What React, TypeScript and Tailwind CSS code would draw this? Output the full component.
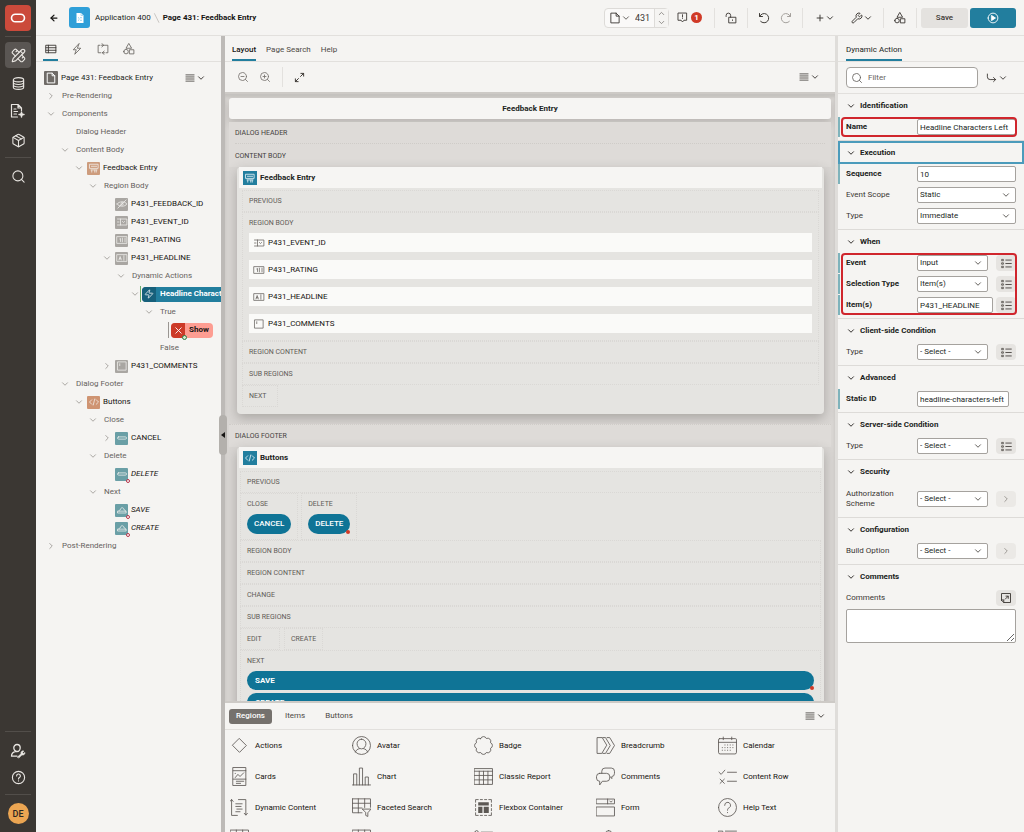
import React, { type ReactNode } from "react";
import { ArrowLeft, ChevronDown, ChevronRight, ChevronUp, Package, PencilRuler, Plus, Search, Wrench, ZoomIn, ZoomOut, Zap } from "lucide-react";

type GlyphProps = { d: string; box?: number; w?: number; className?: string; children?: ReactNode };

function Glyph({ d, box = 16, w = 1, className = "size-3", children }: GlyphProps) {
  return (
    <svg viewBox={`0 0 ${box} ${box}`} fill="none" stroke="currentColor" strokeWidth={w} strokeLinecap="round" strokeLinejoin="round" className={`shrink-0 ${className}`} aria-hidden="true">
      <path d={d} />
      {children}
    </svg>
  );
}

const shapesPath = "M8 1 11.500 7H4.500ZM1 11.500a3 3 0 1 0 6 0a3 3 0 1 0 -6 0ZM9 9h5.500v5.500h-5.500Z";
const menuPath = "M1.5 3h13M1.5 6.300h13M1.5 9.600h13M1.5 13h13";

function MenuChevron({ label }: { label: string }) {
  return (
    <button aria-label={label} className="flex items-center gap-px text-[#403c38]">
      <Glyph d={menuPath} w={1.300} className="size-[10px]" />
      <ChevronDown className="size-[10px]" strokeWidth={2.300} />
    </button>
  );
}

/* ---------- Navigation rail ---------- */

function Rail() {
  return (
    <nav aria-label="Main" className="flex w-9 shrink-0 flex-col items-center bg-[#3b3733] pt-[5px] text-[#e8e5e1]">
      <a href="#home" aria-label="Home" className="flex size-[26px] items-center justify-center rounded bg-[#cb4a3b] text-white">
        <Glyph d="M6 4.700h6a4.300 4.300 0 0 1 0 8.600h-6a4.300 4.300 0 0 1 0-8.600Z" box={18} w={1.800} className="size-4" />
      </a>
      <hr className="mt-[5px] w-[26px] border-[#524e4a]" />
      <a href="#builder" aria-label="App Builder" className="mt-[5px] flex size-[26px] items-center justify-center rounded bg-[#5a5653]">
        <PencilRuler className="size-[15px]" strokeWidth={1.800} />
      </a>
      <a href="#sql" aria-label="SQL Workshop" className="mt-[5px] flex size-5 items-center justify-center">
        <Glyph d="M2.500 4c0-1.400 2.400-2.300 5.500-2.300S13.500 2.600 13.500 4v8c0 1.400-2.400 2.300-5.500 2.300S2.500 13.400 2.500 12ZM2.500 4c0 1.400 2.400 2.300 5.500 2.300S13.500 5.400 13.500 4M2.500 6.700c0 1.400 2.400 2.300 5.500 2.300s5.500-.9 5.500-2.300M2.500 9.400c0 1.400 2.400 2.300 5.500 2.300s5.500-.9 5.500-2.300" w={1.200} className="size-[15px]" />
      </a>
      <a href="#team" aria-label="Team Development" className="mt-2 flex size-5 items-center justify-center">
        <Glyph d="M7.500 14H1.500V1.500H8L11.500 5v2.500M8 1.500V5h3.500M4 6h2M4 8.500h3.500M4 11h2.500" w={1.200} className="size-4">
          <path d="M11.500 8l1 2.500 2.500 1-2.500 1-1 2.500-1-2.500-2.500-1 2.500-1Z" fill="currentColor" strokeWidth={0.300} />
        </Glyph>
      </a>
      <a href="#gallery" aria-label="Gallery" className="mt-[9px] flex size-5 items-center justify-center">
        <Package className="size-[15px]" strokeWidth={1.700} />
      </a>
      <hr className="mt-[7px] w-[26px] border-[#524e4a]" />
      <button aria-label="Search" className="mt-2 flex size-5 items-center justify-center">
        <Search className="size-[15px]" strokeWidth={1.700} />
      </button>
      <div className="mt-auto flex flex-col items-center pb-2">
        <hr className="w-[26px] border-[#524e4a]" />
        <button aria-label="Administration" className="mt-[9px] flex size-5 items-center justify-center">
          <Glyph d="M7 1.500a3.200 3.200 0 0 1 3.200 3.200c0 1.700-1.200 3.800-3.200 3.800S3.800 6.400 3.800 4.700A3.200 3.200 0 0 1 7 1.500ZM5.500 8.300C3 9 1.500 10.500 1.500 13.200H7" w={1.300} className="size-4">
            <path d="M7.500 14 11 10.800a2.200 2.200 0 0 1 2.800-2.800l-1.200 1.400 1 1 1.300-1a2.200 2.200 0 0 1-3 2.500L9 14.800Z" fill="currentColor" strokeWidth={0.600} />
          </Glyph>
        </button>
        <button aria-label="Help" className="mt-[6px] flex size-5 items-center justify-center">
          <Glyph d="M1.500 8a6.500 6.500 0 1 0 13 0a6.500 6.500 0 1 0-13 0ZM6 6.300a2 2 0 1 1 3 1.700c-.7.400-1 .7-1 1.500M8 11.500v.1" w={1.200} className="size-[15px]" />
        </button>
        <hr className="mt-[7px] w-[26px] border-[#524e4a]" />
        <button className="mt-2 flex size-[21px] items-center justify-center rounded-full bg-[#eba552] text-[9px] font-medium text-[#2b2622]">DE</button>
      </div>
    </nav>
  );
}

/* ---------- Header ---------- */

function Divider() {
  return <span className="h-5 w-px bg-[#e3e1de]" />;
}

function Header() {
  return (
    <header className="flex h-9 shrink-0 items-center border-b border-[#e2e0dd] pr-2 pl-[13px]">
      <button aria-label="Back" className="text-[#161513]">
        <ArrowLeft className="size-[10px]" strokeWidth={3} />
      </button>
      <span className="ml-[10px] flex size-[21px] items-center justify-center rounded-[3px] bg-[#2f9fd8]">
        <svg viewBox="0 0 12 12" className="size-3" aria-hidden="true">
          <path d="M2.500 1H7l2.500 2.500V11h-7Z" fill="#fff" />
          <path d="M7 1v2.500h2.500M4 5.500h1M6 5.500h2M4 7h2.500M7.500 7h.5M4 8.500h1M6 8.500h2" stroke="#8ccbe9" strokeWidth=".7" fill="none" />
        </svg>
      </span>
      <a href="#app" className="ml-[5px] text-[#221f1c]">Application 400</a>
      <Glyph d="M4 1 11 15" w={1.100} className="mx-px size-[10px] text-[#b5b2ae]" />
      <h1 className="font-bold whitespace-nowrap text-[#161513]">Page 431: Feedback Entry</h1>

      <div className="ml-auto flex items-center">
        <div className="flex h-5 items-center rounded-sm border border-[#dddbd8] bg-[#faf9f8]">
          <button aria-label="Choose page" className="flex items-center pl-1">
            <Glyph d="M3 1.500h6.500L13.500 5.500v9H3ZM9.500 1.500v4h4" w={1.200} className="size-3" />
            <ChevronDown className="size-[10px]" strokeWidth={1.800} />
          </button>
          <label className="flex">
            <span className="sr-only">Page number</span>
            <input defaultValue="431" className="h-4 w-[23px] bg-transparent pl-1 text-[9px]" />
          </label>
          <div className="flex h-full w-[14px] flex-col items-center justify-between border-l border-[#dddbd8] bg-[#f5f4f2] text-[#77736f]">
            <button aria-label="Next page"><ChevronUp className="size-[9px]" strokeWidth={2} /></button>
            <button aria-label="Previous page"><ChevronDown className="size-[9px]" strokeWidth={2} /></button>
          </div>
        </div>
        <button aria-label="Messages" className="ml-2 flex items-center gap-[3px]">
          <Glyph d="M2 1.500h12v10.500H10L8 14.500l-2-2.500H2ZM8 4v3.300M8 9.200v.1" w={1.300} className="size-[11px]" />
          <span className="flex size-[11px] items-center justify-center rounded-full bg-[#d03a27] text-[8px] leading-none font-bold text-white">1</span>
        </button>
        <span className="ml-3 flex items-center"><Divider /></span>
        <button aria-label="Page unlocked" className="mx-[10px]">
          <Glyph d="M5.500 7h9v7.500h-9ZM7.500 7V4.500a3 3 0 0 0-6 0V6M10 10.500v.8" w={1.200} className="size-3" />
        </button>
        <Divider />
        <button aria-label="Undo" className="ml-[10px]">
          <Glyph d="M2 2v4h4M2.300 5.800A6.200 6.200 0 1 1 3.500 12.500" w={1.300} className="size-3" />
        </button>
        <button aria-label="Redo" className="mx-[10px] text-[#a19d99]">
          <Glyph d="M14 2v4h-4M13.700 5.800A6.200 6.200 0 1 0 12.500 12.500" w={1.300} className="size-3" />
        </button>
        <Divider />
        <button aria-label="Create" className="mr-2 ml-3 flex items-center">
          <Plus className="size-[10px]" strokeWidth={2.300} />
          <ChevronDown className="size-[10px]" strokeWidth={2.300} />
        </button>
        <button aria-label="Utilities" className="mr-[10px] ml-2 flex items-center">
          <Wrench className="size-3" strokeWidth={1.900} />
          <ChevronDown className="size-[10px]" strokeWidth={2.300} />
        </button>
        <Divider />
        <button aria-label="Shared components" className="mx-[10px]">
          <Glyph d={shapesPath} w={1.200} className="size-3" />
        </button>
        <Divider />
        <button className="ml-1 h-5 w-[47px] rounded-[3px] bg-[#e4e2df] font-medium">Save</button>
        <button aria-label="Save and run page" className="ml-[2px] flex h-5 w-[46px] items-center justify-center rounded-[3px] bg-[#227e9e] text-white">
          <Glyph d="M1.500 8a6.500 6.500 0 1 0 13 0a6.500 6.500 0 1 0-13 0Z" w={1.200} className="size-3">
            <path d="M6.300 4.800 11.300 8l-5 3.200Z" fill="currentColor" />
          </Glyph>
        </button>
      </div>
    </header>
  );
}

/* ---------- Rendering tree ---------- */

const itemIcons = {
  hidden: "M1.500 8C4 4 12 4 14.500 8C12 12 4 12 1.500 8ZM8 6.300a1.700 1.700 0 1 0 .01 0M2.500 13.500l11-11",
  select: "M2 4h12.500v8H2M6 4v8M2 8h2M8.500 7.300l1.500 1.400 1.500-1.400",
  number: "M1.500 3.500h13v9h-13ZM5 6.500l1-.5v4M8.500 5.500v5M12 5.500v5",
  text: "M1.500 3.500h13v9h-13ZM4 10.500l1.500-4.500 1.500 4.500M4.500 9h2M10.500 5v6",
  area: "M2.500 2.500h11v11h-11ZM5 5v2.500",
  region: "M2.500 3h11v5.500h-11ZM4.500 5.700h7M4 10.500h8M5 11v2.500M9 11v2.500M11 11v2.500",
  code: "M5 5 2 8l3 3M11 5l3 3-3 3M9 4 7 12",
  button: "M3.500 6.500h9q1.500 0 1.500 1.500t-1.500 1.500h-9Q2 9.500 2 8t1.500-1.500Z",
  hot: "M2.500 9.500h11v2.500h-11ZM4 9.500c0-1.500 1-2 2-2 0-1.500 1-2.500 2.300-2.500S10.500 6 10.500 7.500c1 0 2 .5 2 2",
};

type IconName = keyof typeof itemIcons;

type TreeRow = {
  text: string;
  level: number;
  open?: boolean;
  icon?: IconName;
  tone?: string;
  italic?: boolean;
  kind?: "event" | "action";
};

const rows: TreeRow[] = [
  { text: "Pre-Rendering", level: 0, open: false },
  { text: "Components", level: 0, open: true },
  { text: "Dialog Header", level: 1 },
  { text: "Content Body", level: 1, open: true },
  { text: "Feedback Entry", level: 2, open: true, icon: "region", tone: "bg-[#cd9c7d]" },
  { text: "Region Body", level: 3, open: true },
  { text: "P431_FEEDBACK_ID", level: 4, icon: "hidden", tone: "bg-[#a9a6a2]" },
  { text: "P431_EVENT_ID", level: 4, icon: "select", tone: "bg-[#a9a6a2]" },
  { text: "P431_RATING", level: 4, icon: "number", tone: "bg-[#a9a6a2]" },
  { text: "P431_HEADLINE", level: 4, open: true, icon: "text", tone: "bg-[#a9a6a2]" },
  { text: "Dynamic Actions", level: 5, open: true },
  { text: "Headline Characters Left", level: 6, open: true, kind: "event" },
  { text: "True", level: 7, open: true },
  { text: "Show", level: 8, kind: "action" },
  { text: "False", level: 7 },
  { text: "P431_COMMENTS", level: 4, open: false, icon: "area", tone: "bg-[#a9a6a2]" },
  { text: "Dialog Footer", level: 1, open: true },
  { text: "Buttons", level: 2, open: true, icon: "code", tone: "bg-[#cf9472]" },
  { text: "Close", level: 3, open: true },
  { text: "CANCEL", level: 4, open: false, icon: "button", tone: "bg-[#6a9fa6]" },
  { text: "Delete", level: 3, open: true },
  { text: "DELETE", level: 4, icon: "button", tone: "bg-[#6a9fa6]", italic: true },
  { text: "Next", level: 3, open: true },
  { text: "SAVE", level: 4, icon: "hot", tone: "bg-[#6a9fa6]", italic: true },
  { text: "CREATE", level: 4, icon: "hot", tone: "bg-[#6a9fa6]", italic: true },
  { text: "Post-Rendering", level: 0, open: false },
];

const indents = ["pl-2", "pl-[22px]", "pl-9", "pl-[50px]", "pl-16", "pl-[78px]", "pl-[92px]", "pl-[106px]", "pl-[120px]"];

function TreeLabel({ row }: { row: TreeRow }) {
  if (row.kind === "event") {
    return (
      <span className="-ml-0.5 flex h-4 flex-1 items-center border-l border-[#6fae6a] pl-px">
        <span className="flex h-[15px] flex-1 items-center rounded-l-sm bg-[#227e9e] font-bold text-white">
          <span className="mr-1 flex h-full w-[14px] items-center justify-center rounded-l-sm bg-[#17607b]">
            <Zap className="size-[10px]" strokeWidth={1.800} />
          </span>
          {row.text}
        </span>
      </span>
    );
  }
  if (row.kind === "action") {
    return (
      <span className="-ml-0.5 flex h-4 items-center border-l border-[#9a9692] pl-0.5">
        <span className="flex h-[15px] items-center rounded-sm bg-[#fd9d92] pr-1 font-bold text-[#161513]">
          <span className="relative mr-1 flex h-full w-[14px] items-center justify-center rounded-l-sm bg-[#cc3a28] text-white">
            <Glyph d="M4 4l8 8M12 4l-8 8" w={1.300} className="size-[11px]" />
            <span className="absolute -right-[2px] -bottom-[2px] size-[5px] rounded-full border border-[#2d7a3e] bg-[#d5ead3]" />
          </span>
          {row.text}
        </span>
      </span>
    );
  }
  if (row.icon) {
    return (
      <span className={`ml-px flex items-center gap-[3px] text-[#161310] ${row.italic ? "italic" : ""}`}>
        <span className={`relative flex size-[13px] items-center justify-center rounded-[1px] text-[#f3f1ef] ${row.tone}`}>
          <Glyph d={itemIcons[row.icon]} w={1} className="size-3" />
          {row.italic && <span className="absolute -right-0.5 -bottom-0.5 size-1 rounded-full border border-[#b5354a] bg-white" />}
        </span>
        {row.text}
      </span>
    );
  }
  return <span className="ml-1 text-[#66625e]">{row.text}</span>;
}

function Tree() {
  return (
    <section aria-label="Rendering" className="flex w-[185px] shrink-0 flex-col overflow-hidden">
      <div role="tablist" className="flex h-[26px] shrink-0 items-stretch gap-[11px] border-b border-[#e2e0dd] pl-[7px]">
        <button role="tab" aria-selected="true" aria-label="Rendering" className="flex w-[15px] items-center justify-center border-b-2 border-[#227e9e] pt-[3px]">
          <Glyph d="M1.500 3h13v10h-13ZM4.500 3v10M1.500 6.300h13M1.500 9.700h13" w={1.200} className="size-3" />
        </button>
        <button role="tab" aria-selected="false" aria-label="Dynamic Actions" className="flex w-[15px] items-center justify-center pt-px text-[#66625e]">
          <Glyph d="M10.500 1 3 9h4l-2 6 8-8H9Z" w={1.100} className="size-3" />
        </button>
        <button role="tab" aria-selected="false" aria-label="Processing" className="flex w-[15px] items-center justify-center pt-px text-[#66625e]">
          <Glyph d="M4 3H1.500v10H5M10 3h4.500v10H12M6.500.8 9 3 6.500 5.200M9.500 10.800 7 13l2.500 2.200M6 3h3M7 13h3" w={1.100} className="size-3" />
        </button>
        <button role="tab" aria-selected="false" aria-label="Page Shared Components" className="flex w-[15px] items-center justify-center pt-px text-[#66625e]">
          <Glyph d={shapesPath} w={1.100} className="size-3" />
        </button>
      </div>
      <div className="mt-[7px] flex h-[18px] items-center pr-[15px] pl-2 text-[#221f1c]">
        <span className="mr-[3px] flex size-[14px] items-center justify-center rounded-[1px] bg-[#6f6b67] text-white">
          <Glyph d="M3.500 1.500h6L13 5v9.500H3.500ZM9.500 1.500V5H13" w={1.300} className="size-3" />
        </span>
        <span className="mr-auto whitespace-nowrap">Page 431: Feedback Entry</span>
        <MenuChevron label="Tree menu" />
      </div>
      <ul>
        {rows.map((row, i) => (
          <li key={i} className={`flex h-[18px] items-center whitespace-nowrap ${indents[row.level]}`}>
            <span className="flex w-[14px] shrink-0 justify-center text-[#8f8b87]">
              {row.open === true && <ChevronDown className="size-[10px]" strokeWidth={1.800} />}
              {row.open === false && <ChevronRight className="size-[10px]" strokeWidth={1.800} />}
            </span>
            <TreeLabel row={row} />
          </li>
        ))}
      </ul>
    </section>
  );
}

/* ---------- Layout canvas ---------- */

function Slot({ name, className = "", children }: { name: string; className?: string; children?: ReactNode }) {
  return (
    <div className={`border border-dotted border-[#dad8d5] px-[6px] text-[7px] text-[#5f5b57] ${className}`}>
      <div className="flex h-5 items-center whitespace-nowrap">{name}</div>
      {children}
    </div>
  );
}

function RegionCard({ title, icon, children }: { title: string; icon: IconName; children: ReactNode }) {
  return (
    <div className="rounded bg-[#e5e4e1] px-[2px] shadow-[0_4px_12px_rgba(60,56,52,0.3)]">
      <div className="flex h-[21px] items-center bg-[#f6f5f3] pt-px pl-1 font-bold text-[#221f1c]">
        <span className="mr-[3px] flex size-[14px] items-center justify-center bg-[#227e9e] text-[#d8eaf1]">
          <Glyph d={itemIcons[icon]} w={1.200} className="size-3" />
        </span>
        {title}
      </div>
      {children}
    </div>
  );
}

const pageItems: { name: string; icon: IconName }[] = [
  { name: "P431_EVENT_ID", icon: "select" },
  { name: "P431_RATING", icon: "number" },
  { name: "P431_HEADLINE", icon: "text" },
  { name: "P431_COMMENTS", icon: "area" },
];

function RedDot() {
  return <span className="absolute right-0 bottom-0 size-1 rounded-full bg-[#d03a27]" />;
}

function Canvas() {
  return (
    <div className="min-h-0 flex-1 overflow-hidden bg-[#d9d6d3] px-1 pt-1 shadow-[inset_0_3px_3px_rgba(60,56,52,0.12)]">
      <div className="flex h-[21px] items-center justify-center rounded-[3px] bg-[#f6f5f3] font-bold text-[#221f1c] shadow-[0_4px_8px_rgba(60,56,52,0.2)]">Feedback Entry</div>
      <div className="bg-[#dedbd8] px-[6px] text-[7px] text-[#45413d]">
        <div className="mt-[3px] flex h-[22px] items-center border-b border-dotted border-[#cfccc8]">DIALOG HEADER</div>
        <div className="flex h-[23px] items-center">CONTENT BODY</div>
      </div>
      <div className="pr-[7px] pl-2">
        <RegionCard title="Feedback Entry" icon="region">
          <div className="flex flex-col px-[3px] pt-[2px] pb-[7px]">
            <Slot name="PREVIOUS" />
            <Slot name="REGION BODY" className="pb-[7px]">
              <div className="flex flex-col gap-2">
                {pageItems.map((item) => (
                  <div key={item.name} className="flex h-[19px] items-center gap-[3px] bg-[#fafaf8] pl-1 text-[8px] text-[#161310]">
                    <Glyph d={itemIcons[item.icon]} w={1} className="size-3 text-[#66625e]" />
                    {item.name}
                  </div>
                ))}
              </div>
            </Slot>
            <Slot name="REGION CONTENT" />
            <Slot name="SUB REGIONS" />
            <Slot name="NEXT" className="w-9" />
          </div>
        </RegionCard>
      </div>
      <div className="mt-[10px] flex h-[23px] items-center border-t border-dotted border-[#cfccc8] bg-[#dedbd8] px-[6px] text-[7px] text-[#45413d]">DIALOG FOOTER</div>
      <div className="pr-[7px] pl-2">
        <RegionCard title="Buttons" icon="code">
          <div className="flex flex-col px-px pt-[3px]">
            <Slot name="PREVIOUS" />
            <div className="flex gap-[3px]">
              <Slot name="CLOSE" className="pb-[5px]">
                <button className="block h-5 rounded-full bg-[#0f7496] px-[7px] text-[8px] font-medium text-white">CANCEL</button>
              </Slot>
              <Slot name="DELETE" className="pb-[5px]">
                <button className="relative block h-5 rounded-full bg-[#0f7496] px-[7px] text-[8px] font-medium text-white">
                  DELETE
                  <RedDot />
                </button>
              </Slot>
            </div>
            <Slot name="REGION BODY" />
            <Slot name="REGION CONTENT" />
            <Slot name="CHANGE" />
            <Slot name="SUB REGIONS" />
            <div className="flex gap-1">
              <Slot name="EDIT" className="w-10" />
              <Slot name="CREATE" />
            </div>
            <Slot name="NEXT">
              <button className="relative block h-[19px] w-full rounded-full bg-[#0f7496] px-2 text-left text-[8px] font-bold text-white">
                SAVE
                <RedDot />
              </button>
              <button className="mt-[3px] block h-[19px] w-full rounded-full bg-[#0f7496] px-2 text-left text-[8px] font-bold text-white">CREATE</button>
            </Slot>
          </div>
        </RegionCard>
      </div>
    </div>
  );
}

/* ---------- Component gallery ---------- */

const gallery: { name: string; d: string; hideLabel?: boolean; solid?: string }[] = [
  { name: "Actions", d: "M9 2.500 15.500 9 9 15.500 2.500 9Z" },
  { name: "Avatar", d: "M.5 9a8.500 8.500 0 1 0 17 0a8.500 8.500 0 1 0-17 0ZM9 3a4.200 4.200 0 0 1 4.200 4.200c0 2.500-1.700 5-4.200 5s-4.200-2.500-4.200-5A4.200 4.200 0 0 1 9 3ZM7 12c-2 .4-3.300 1.500-3.800 3.200M11 12c2 .4 3.300 1.500 3.800 3.200" },
  { name: "Badge", d: "M6.300 2.400A2.900 2.900 0 0 1 11.700 2.400A2.900 2.900 0 0 1 15.600 6.300A2.900 2.900 0 0 1 15.600 11.700A2.900 2.900 0 0 1 11.700 15.600A2.900 2.900 0 0 1 6.300 15.600A2.900 2.900 0 0 1 2.400 11.700A2.900 2.900 0 0 1 2.400 6.300A2.900 2.900 0 0 1 6.300 2.400Z" },
  { name: "Breadcrumb", d: "M5.500 1.500H1v15h4.500L10 9ZM6.500 1.500H9L13.500 9 9 16.500H6.500M10.500 1.500h2.500L17.500 9l-4.500 7.500h-2.500" },
  { name: "Calendar", d: "M1.500 2.500h15q1 0 1 1v12q0 1.500-1.500 1.500H2Q.5 17 .5 15.500v-12q0-1 1-1ZM.5 6h17M5 1v2.500M13 1v2.500M6.500 8.500h.2M9 8.500h.2M11.500 8.500h.2M14 8.500h.2M4 11h.2M6.500 11h.2M9 11h.2M11.500 11h.2M14 11h.2M4 13.500h.2M6.500 13.500h.2M9 13.500h.2M11.500 13.500h.2" },
  { name: "Cards", d: "M3 .5h12v17H3ZM3 3.500h12M3 11.500h12M5 10l2.500-3 2 2 3.500-3.500M5 6v.2M6 13.500h7M6 15.500h4" },
  { name: "Chart", d: "M.5 17h17M1.500 17V6.500h3V17M7 17V1h3V17M12.500 17V9.500h3V17" },
  { name: "Classic Report", d: "M.5 1.500h17v15H.5ZM.5 4h17M.5 8h17M.5 12.200h17M5 4v12.500M9 4v12.500M13.200 4v12.500" },
  { name: "Comments", d: "M5.500 6V4Q5.500 1 8.500 1h6q3 0 3 3v2q0 3-2.500 3v2l-1.500-1.800M3.500 6h6.500q3 0 3 3v1.500q0 3-3 3H6L3.500 17v-3.500Q.5 13.500.5 10.500V9q0-3 3-3Z" },
  { name: "Content Row", d: "M1 5l2 2 3.500-4M9 5h8.500M2 11.500l4 4M6 11.500l-4 4M9 13.500h8.500" },
  { name: "Dynamic Content", d: "M4.500 16.500H1.500V1.500M0 3.200 1.500 1.500 3 3.200M7 16.500H5M8 1.500h7V16M13.500 14.500l1.500 1.700 1.500-1.700M5.500 5.500h6M5.500 8h5M6.500 10.500h5M5.500 13h4" },
  { name: "Faceted Search", d: "M.5.8h17v8M.5.8V14h9M.5 5h17M.5 9.500h9M6 .8V14M12 .8V9M10 10.500h8l-3 3.500v3.500l-2-1V14Z" },
  { name: "Flexbox Container", d: "M1.500 4V1.500H4M6 1.500h2M10 1.500h2M14 1.500h2.500V4M16.500 6v2M16.500 10v2M16.500 14v2.500H14M12 16.500h-2M8 16.500H6M4 16.500H1.500V14M1.500 12v-2M1.500 8V6", solid: "M4 4h10v3H4ZM4 8.200h4v6H4ZM9.200 8.200H14v6H9.200Z" },
  { name: "Form", d: "M.5 1h17v4.500H.5ZM11 1v4.500M13 2.800l1.200 1.200 1.200-1.200M.5 8.500h17V17H.5Z" },
  { name: "Help Text", d: "M.5 9a8.500 8.500 0 1 0 17 0a8.500 8.500 0 1 0-17 0ZM6.300 7a2.800 2.800 0 1 1 4.200 2.300c-1 .6-1.500 1-1.500 2.300M9 13.700v.2" },
  { name: "Interactive Grid", d: "M.5 1h17v15H.5ZM.5 5h17M6 1v15M12 1v15", hideLabel: true },
  { name: "Interactive Report", d: "M.5 1h17v15H.5ZM.5 5h17M6 1v15M12 1v15", hideLabel: true },
  { name: "List", d: "M1 3a1.500 1.500 0 1 0 3 0a1.500 1.500 0 1 0-3 0ZM7 3h10.500M7 9h10.500", hideLabel: true },
  { name: "Map", d: "M12 1.500a3 3 0 0 1 3 3c0 2-3 5-3 5S9 6.500 9 4.500a3 3 0 0 1 3-3Z", hideLabel: true },
  { name: "Region Display Selector", d: "M.5 2h4v4h-4ZM7 2h10.500M7 5h8", hideLabel: true },
];

function Gallery() {
  return (
    <section aria-label="Gallery" className="flex h-[131px] shrink-0 flex-col overflow-hidden border-t-2 border-[#cdcac6]">
      <div className="flex h-[27px] shrink-0 items-center border-b border-[#e2e0dd] pr-[9px] pl-1 text-[#4d4945]">
        <div role="tablist" className="mr-auto flex items-center gap-[13px]">
          <button role="tab" aria-selected="true" className="h-[15px] w-[43px] rounded-[3px] bg-[#75716d] font-medium text-white">Regions</button>
          <button role="tab" aria-selected="false">Items</button>
          <button role="tab" aria-selected="false" className="ml-[7px]">Buttons</button>
        </div>
        <MenuChevron label="Gallery menu" />
      </div>
      <div className="grid grid-cols-5">
        {gallery.map((entry) => (
          <button key={entry.name} aria-label={entry.name} className="flex h-[31px] items-center gap-[6px] pl-[5px] text-left whitespace-nowrap text-[#161310]">
            <Glyph d={entry.d} box={18} w={0.800} className="size-[19px] text-[#5c5854]">
              {entry.solid && <path d={entry.solid} fill="currentColor" stroke="none" />}
            </Glyph>
            {!entry.hideLabel && entry.name}
          </button>
        ))}
      </div>
    </section>
  );
}

function Center() {
  return (
    <main className="flex min-w-0 flex-1 flex-col">
      <div role="tablist" className="flex h-[26px] shrink-0 items-stretch gap-[10px] border-b border-[#e2e0dd] pl-[7px] text-[#4d4945]">
        <button role="tab" aria-selected="true" className="border-b-2 border-[#227e9e] pt-1 font-medium text-[#161513]">Layout</button>
        <button role="tab" aria-selected="false" className="pt-[2px]">Page Search</button>
        <button role="tab" aria-selected="false" className="pt-[2px]">Help</button>
      </div>
      <div className="flex h-8 shrink-0 items-center border-b-2 border-[#cdcac6] pr-[15px] pl-3">
        <button aria-label="Zoom out" className="text-[#77736f]"><ZoomOut className="size-3" strokeWidth={1.700} /></button>
        <button aria-label="Zoom in" className="ml-[10px] text-[#77736f]"><ZoomIn className="size-3" strokeWidth={1.700} /></button>
        <span className="ml-[11px] h-5 w-px bg-[#e3e1de]" />
        <button aria-label="Expand" className="mr-auto ml-[11px]">
          <Glyph d="M9.500 6.500 14 2M10 2h4v4M6.500 9.500 2 14M2 10v4h4" w={1.400} className="size-[11px]" />
        </button>
        <MenuChevron label="Layout menu" />
      </div>
      <Canvas />
      <Gallery />
    </main>
  );
}

/* ---------- Property editor ---------- */

function Section({ title, focused, children }: { title: string; focused?: boolean; children: ReactNode }) {
  return (
    <section className="border-b border-[#dddbd8] pb-[3px] last:border-b-0">
      <h2 className={focused ? "border-2 border-[#4b9bbb]" : ""}>
        <button className={`flex items-center gap-1 text-left font-bold text-[#221f1c] ${focused ? "h-[19px] pl-[6px]" : "h-[23px] pl-2"}`}>
          <ChevronDown className="size-[10px]" strokeWidth={2.200} />
          {title}
        </button>
      </h2>
      <div className="flex flex-col gap-px">{children}</div>
    </section>
  );
}

function Row({ id, label, required, changed, children }: { id: string; label: string; required?: boolean; changed?: boolean; children: ReactNode }) {
  return (
    <div className={`flex min-h-5 items-center border-l-2 pr-2 pl-[6px] ${changed ? "border-[#7fb3bb]" : "border-transparent"}`}>
      <label htmlFor={id} className={`w-[71px] shrink-0 leading-[10px] ${required ? "font-bold text-[#221f1c]" : ""}`}>{label}</label>
      {children}
    </div>
  );
}

const fieldClass = "h-4 rounded-[2px] border border-[#a5a29e] bg-white pl-[2px] text-[8px] text-[#221f1c]";

function SelectBox({ id, value, wide }: { id: string; value: string; wide?: boolean }) {
  return (
    <span className={`grid items-center ${wide ? "flex-1" : "w-[71px]"}`}>
      <select id={id} defaultValue={value} className={`col-start-1 row-start-1 w-full appearance-none ${fieldClass}`}>
        <option>{value}</option>
      </select>
      <ChevronDown className="pointer-events-none col-start-1 row-start-1 mr-[5px] size-[10px] justify-self-end" strokeWidth={1.900} />
    </span>
  );
}

function ListButton({ label }: { label: string }) {
  return (
    <button aria-label={label} className="ml-auto flex h-4 w-5 items-center justify-center rounded-sm bg-[#e6e4e1]">
      <Glyph d="M7 3h8M7 8h8M7 13h8" w={1.200} className="size-[11px]">
        <path d="M1.500 2h2v2h-2ZM1.500 7h2v2h-2ZM1.500 12h2v2h-2Z" strokeWidth={1} />
      </Glyph>
    </button>
  );
}

function GoButton({ label }: { label: string }) {
  return (
    <button aria-label={label} className="ml-auto flex h-4 w-5 items-center justify-center rounded-sm bg-[#ebe9e6] text-[#8f8b87]">
      <ChevronRight className="size-[10px]" strokeWidth={2} />
    </button>
  );
}

function Highlight({ children }: { children: ReactNode }) {
  return (
    <div className="relative flex flex-col gap-px">
      {children}
      <span className="pointer-events-none absolute inset-y-0 right-[7px] left-[3px] rounded border-2 border-[#d0262d]" />
    </div>
  );
}

function Properties() {
  return (
    <aside aria-label="Property editor" className="flex w-[186px] shrink-0 flex-col overflow-hidden">
      <div role="tablist" className="flex h-[26px] shrink-0 items-stretch border-b border-[#e2e0dd] pl-2">
        <button role="tab" aria-selected="true" className="border-b-2 border-[#227e9e] pt-1 text-[#221f1c]">Dynamic Action</button>
      </div>
      <div className="flex h-8 shrink-0 items-center border-b border-[#e2e0dd] pr-4 pl-2">
        <label className="flex h-[21px] w-[132px] items-center gap-[5px] rounded-sm border border-[#a5a29e] bg-white pl-1">
          <Search className="size-3 shrink-0 text-[#66625e]" strokeWidth={1.700} />
          <input type="search" placeholder="Filter" aria-label="Filter" className="w-full bg-transparent text-[8px] placeholder:text-[#66625e]" />
        </label>
        <button aria-label="Go to group" className="ml-auto flex items-center gap-px">
          <Glyph d="M2 3v4q0 4 4 4h8M11 8l3 3-3 3" w={1.300} className="size-[11px]" />
          <ChevronDown className="size-[10px]" strokeWidth={2.200} />
        </button>
      </div>
      <Section title="Identification">
        <Highlight>
          <Row id="name" label="Name" required changed>
            <input id="name" defaultValue="Headline Characters Left" className={`w-0 flex-1 ${fieldClass}`} />
          </Row>
        </Highlight>
      </Section>
      <Section title="Execution" focused>
        <Row id="sequence" label="Sequence" required changed>
          <input id="sequence" defaultValue="10" className={`w-0 flex-1 ${fieldClass}`} />
        </Row>
        <Row id="scope" label="Event Scope"><SelectBox id="scope" value="Static" wide /></Row>
        <Row id="type" label="Type"><SelectBox id="type" value="Immediate" wide /></Row>
      </Section>
      <Section title="When">
        <Highlight>
          <Row id="event" label="Event" required changed><SelectBox id="event" value="Input" /><ListButton label="Events" /></Row>
          <Row id="seltype" label="Selection Type" required changed><SelectBox id="seltype" value="Item(s)" /><ListButton label="Selection types" /></Row>
          <Row id="items" label="Item(s)" required changed>
            <input id="items" defaultValue="P431_HEADLINE" className={`w-[76px] ${fieldClass}`} />
            <ListButton label="Items" />
          </Row>
        </Highlight>
      </Section>
      <Section title="Client-side Condition">
        <Row id="client" label="Type"><SelectBox id="client" value="- Select -" /><ListButton label="Client-side types" /></Row>
      </Section>
      <Section title="Advanced">
        <Row id="static" label="Static ID" required changed>
          <input id="static" defaultValue="headline-characters-left" className={`w-[92px] ${fieldClass}`} />
        </Row>
      </Section>
      <Section title="Server-side Condition">
        <Row id="server" label="Type"><SelectBox id="server" value="- Select -" /><ListButton label="Server-side types" /></Row>
      </Section>
      <Section title="Security">
        <div className="flex min-h-[31px] flex-col justify-center">
          <Row id="auth" label="Authorization Scheme"><SelectBox id="auth" value="- Select -" /><GoButton label="Go to scheme" /></Row>
        </div>
      </Section>
      <Section title="Configuration">
        <Row id="build" label="Build Option"><SelectBox id="build" value="- Select -" /><GoButton label="Go to build option" /></Row>
      </Section>
      <Section title="Comments">
        <Row id="comments" label="Comments">
          <button aria-label="Open editor" className="ml-auto flex h-4 w-5 items-center justify-center rounded-sm bg-[#e6e4e1]">
            <Glyph d="M2 11V2h12v12H5M2 11l3 3v-3ZM7 9.500 11 5.500M8 5.500h3v3" w={1.200} className="size-3" />
          </button>
        </Row>
        <textarea id="comments" className="mx-2 block h-[34px] rounded-[2px] border border-[#a5a29e] bg-white" />
      </Section>
    </aside>
  );
}

export default function App() {
  return (
    <div className="flex h-screen overflow-hidden bg-[#f5f4f2] font-[Roboto,'Liberation_Sans',sans-serif] text-[8px] leading-[12px] text-[#3a3632]">
      <Rail />
      <div className="flex min-w-0 flex-1 flex-col">
        <Header />
        <div className="flex min-h-0 flex-1">
          <Tree />
          <div className="relative z-10 w-1 shrink-0 bg-[#bdbab7]">
            <button aria-label="Collapse tree" className="absolute top-[379px] -left-[2px] flex h-10 w-2 items-center justify-center rounded-sm bg-[#b3b0ac]">
              <svg viewBox="0 0 4 6" className="h-[6px] w-1" aria-hidden="true"><path d="M4 0v6L0 3Z" fill="#161513" /></svg>
            </button>
          </div>
          <Center />
          <div className="w-[3px] shrink-0 bg-[#dfddda]" />
          <Properties />
        </div>
      </div>
    </div>
  );
}
